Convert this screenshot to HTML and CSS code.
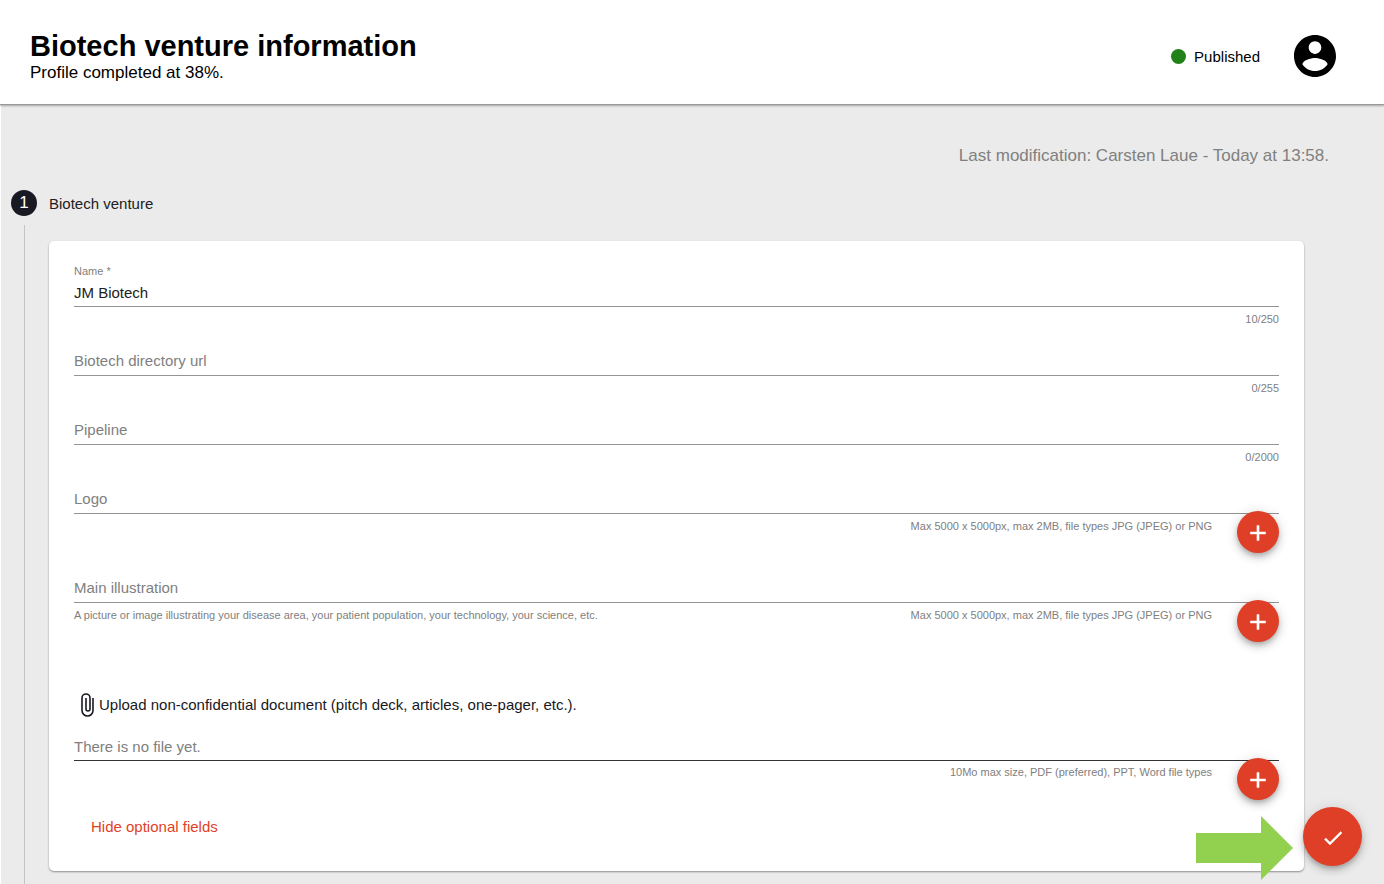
FILE: index.html
```html
<!DOCTYPE html>
<html lang="en">
<head>
<meta charset="UTF-8">
<meta name="viewport" content="width=device-width, initial-scale=1">
<title>Biotech venture information</title>
<link rel="stylesheet" href="styles.css">
</head>
<body>
<header class="topbar">
  <div>
    <h1>Biotech venture information</h1>
    <p class="progress">Profile completed at 38%.</p>
  </div>
  <div class="account">
    <span class="status">Published</span>
    <button type="button" class="avatar" aria-label="Account">
      <svg viewBox="2 2 20 20"><path d="M12 2C6.480 2 2 6.480 2 12s4.480 10 10 10 10-4.480 10-10S17.520 2 12 2zm0 3c1.660 0 3 1.340 3 3s-1.340 3-3 3-3-1.340-3-3 1.340-3 3-3zm0 14.200c-2.500 0-4.710-1.280-6-3.220.030-1.990 4-3.080 6-3.080 1.990 0 5.970 1.090 6 3.080-1.290 1.940-3.500 3.220-6 3.220z"/></svg>
    </button>
  </div>
</header>

<main>
  <p class="modified">Last modification: Carsten Laue - Today at 13:58.</p>

  <h2 class="step"><span class="step-number">1</span>Biotech venture</h2>

  <div class="step-content">
    <form class="card">
      <div class="field filled">
        <label for="name">Name *</label>
        <input type="text" id="name" value="JM Biotech">
        <div class="hints"><span class="right">10/250</span></div>
      </div>

      <div class="field">
        <label for="url">Biotech directory url</label>
        <input type="text" id="url">
        <div class="hints"><span class="right">0/255</span></div>
      </div>

      <div class="field">
        <label for="pipeline">Pipeline</label>
        <input type="text" id="pipeline">
        <div class="hints"><span class="right">0/2000</span></div>
      </div>

      <div class="field">
        <label for="logo">Logo</label>
        <input type="text" id="logo">
        <div class="hints">
          <span class="right">Max 5000 x 5000px, max 2MB, file types JPG (JPEG) or PNG</span>
          <button type="button" class="fab" aria-label="Add logo"><svg viewBox="0 0 24 24"><path d="M19 13h-6v6h-2v-6H5v-2h6V5h2v6h6v2z"/></svg></button>
        </div>
      </div>

      <div class="field">
        <label for="illustration">Main illustration</label>
        <input type="text" id="illustration">
        <div class="hints">
          <span>A picture or image illustrating your disease area, your patient population, your technology, your science, etc.</span>
          <span class="right">Max 5000 x 5000px, max 2MB, file types JPG (JPEG) or PNG</span>
          <button type="button" class="fab" aria-label="Add illustration"><svg viewBox="0 0 24 24"><path d="M19 13h-6v6h-2v-6H5v-2h6V5h2v6h6v2z"/></svg></button>
        </div>
      </div>

      <!-- document upload -->
      <label class="upload-title" for="document">
        <svg viewBox="0 0 25 25"><path d="M19 6v12.500a5.500 5.500 0 0 1-11 0V6a4 4 0 0 1 8 0v11a2 2 0 0 1-4 0V6"/></svg>
        Upload non-confidential document (pitch deck, articles, one-pager, etc.).
      </label>
      <div class="field document">
        <input type="text" id="document" placeholder="There is no file yet." readonly>
        <div class="hints">
          <span class="right">10Mo max size, PDF (preferred), PPT, Word file types</span>
          <button type="button" class="fab" aria-label="Add document"><svg viewBox="0 0 24 24"><path d="M19 13h-6v6h-2v-6H5v-2h6V5h2v6h6v2z"/></svg></button>
        </div>
      </div>

      <button type="button" class="toggle">Hide optional fields</button>
    </form>
  </div>
</main>

<svg class="arrow" viewBox="0 0 97 64" aria-hidden="true"><path d="M0 17h65V0l32 32-32 32V47H0z"/></svg>
<button type="button" class="save" aria-label="Save"><svg viewBox="0 0 24 24"><path d="M9 16.170L4.830 12l-1.420 1.410L9 19 21 7l-1.410-1.410z"/></svg></button>
</body>
</html>
```
FILE: styles.css
```css
*{box-sizing:border-box}
body{
  margin:0;
  min-height:100vh;
  display:flex;
  flex-direction:column;
  font-family:"Liberation Sans",Arial,Helvetica,sans-serif;
  font-size:15px;
  color:#212121;
  background:#fff;
}
h1,h2,p{margin:0}
button{border:none;padding:0;font:inherit;cursor:pointer}

/* header */
.topbar{
  display:flex;
  justify-content:space-between;
  align-items:center;
  padding:29px 48px 21px 30px;
  color:#000;
  background:#fff;
  border-bottom:1px solid #999;
  box-shadow:0 1px 2px rgba(0,0,0,.3);
  position:relative;
}
h1{font-size:29px;line-height:34px}
.progress{font-size:17px;line-height:20px}
.account{display:flex;align-items:center;gap:34px}
.status{display:flex;align-items:center;gap:8px}
.status::before{content:"";width:15px;height:15px;border-radius:50%;background:#21821a}
.avatar{width:42px;height:42px;background:none}
.avatar svg{display:block}

/* stepper */
main{
  flex:1;
  display:flex;
  flex-direction:column;
  margin-left:1px;
  background:#ebebeb;
}
.modified{padding:41px 55px 0;font-size:17px;line-height:20px;text-align:right;color:#808080}
.step{
  display:flex;
  align-items:center;
  gap:12px;
  margin:24px 0 9px 10px;
  font-size:15px;
  font-weight:normal;
}
.step-number{
  width:26px;
  height:26px;
  border-radius:50%;
  background:#191923;
  color:#fff;
  font-size:17px;
  line-height:26px;
  text-align:center;
}
.step-content{
  flex:1;
  margin-left:23px;
  padding:16px 80px 12px 24px;
  border-left:1px solid #c4c4c4;
}
.card{
  display:flex;
  flex-direction:column;
  gap:5px;
  padding:21px 25px 34px;
  background:#fff;
  border-radius:5px;
  box-shadow:0 1px 2px rgba(0,0,0,.4);
}

/* fields: the label lies in the input row until the field is filled */
.field{display:grid;grid-template-rows:18px 27px auto}
.field label{grid-area:2/1;line-height:24px;color:#808080}
.field input{
  grid-area:2/1;
  width:100%;
  border:none;
  border-bottom:1px solid #949494;
  padding:0 0 2px;
  font:inherit;
  color:#212121;
  background:none;
  outline:none;
}
.filled label{grid-area:1/1;font-size:11px;line-height:18px}
.hints{
  grid-row:3;
  display:flex;
  align-items:flex-start;
  gap:25px;
  font-size:11px;
  line-height:14px;
  color:#808080;
}
.hints span{padding-top:5px}
.hints .right{margin-left:auto}
.fab,.save{
  border-radius:50%;
  background:#df3f26;
  box-shadow:0 3px 5px -1px rgba(0,0,0,.2),0 5px 9px rgba(0,0,0,.14),0 1px 14px rgba(0,0,0,.12);
}
.fab{flex:none;width:42px;height:42px;margin-top:-3px}
svg{fill:currentColor}
.fab,.save{color:#fff;padding-top:2px}
.fab svg,.save svg{display:block;margin:auto;stroke:currentColor;stroke-width:.4}
.fab svg{width:26px}

.upload-title{display:flex;align-items:center;margin-top:45px;color:#191923}
.upload-title svg{width:25px;height:25px;fill:none;stroke:currentColor;stroke-width:1.6}
.document{grid-template-rows:27px auto;margin-top:12px}
.document input{grid-area:1/1;border-bottom-color:#333}
.document input::placeholder{color:#808080;opacity:1}
.document .hints{grid-row:2}
.document .hints span{padding-top:4px}
.toggle{align-self:flex-start;margin:12px 17px 0;line-height:20px;color:#df3f26;background:none}

/* floating save button and its pointer */
.save{position:fixed;right:22px;bottom:18px;width:59px;height:59px}
.save svg{width:24px}
.arrow{position:fixed;right:91px;bottom:4px;width:97px;height:64px;fill:#92d14f}
```
